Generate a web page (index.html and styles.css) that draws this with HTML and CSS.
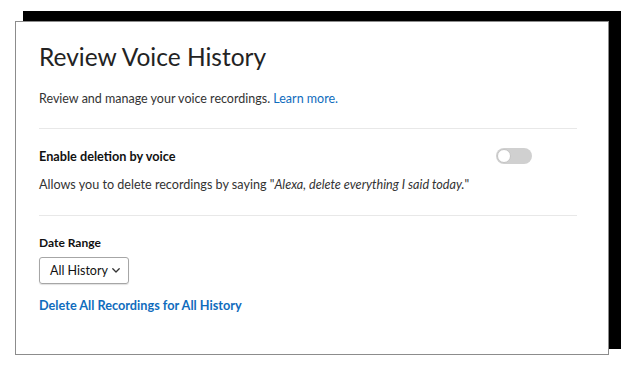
FILE: index.html
```html
<!DOCTYPE html>
<html lang="en">
<head>
<meta charset="utf-8">
<title>Review Voice History</title>
<link rel="stylesheet" href="styles.css">
</head>
<body>
<div class="card">
  <h1 class="title">Review Voice History</h1>
  <p class="intro">Review and manage your voice recordings. <a class="link" href="#">Learn more.</a></p>
  <hr class="sep">
  <div class="row">
    <span class="label">Enable deletion by voice</span>
    <span class="toggle"><span class="knob"></span></span>
  </div>
  <p class="desc">Allows you to delete recordings by saying "<em>Alexa, delete everything I said today.</em>"</p>
  <hr class="sep sep2">
  <div class="label small">Date Range</div>
  <div class="select"><span>All History</span>
    <svg class="chev" width="8" height="5" viewBox="0 0 8 5"><path d="M0.8 0.8 L4 4 L7.2 0.8" fill="none" stroke="#333" stroke-width="1.3" stroke-linecap="round" stroke-linejoin="round"/></svg>
  </div>
  <a class="link strong" href="#">Delete All Recordings for All History</a>
</div>
</body>
</html>
```

FILE: styles.css
```css
html, body {
  margin: 0;
  padding: 0;
  background: #fff;
}
body {
  font-family: Lato, "Liberation Sans", sans-serif;
  color: #333;
}
.card {
  box-sizing: border-box;
  margin: 21px 0 0 15px;
  width: 594px;
  height: 334px;
  border: 1px solid #8c8c8c;
  background: #fff;
  box-shadow: 10px -8px 0 2px #000;
  padding: 18px 31px 0 23px;
  display: flex;
  flex-direction: column;
  align-items: flex-start;
}
.title {
  margin: 0;
  font-size: 24.5px;
  font-weight: 400;
  line-height: 34px;
  color: #232323;
}
.intro {
  margin: 16px 0 0;
  font-size: 12.5px;
  line-height: 18px;
}
.link {
  color: #0f6cbd;
  text-decoration: none;
}
.sep {
  align-self: stretch;
  border: 0;
  border-top: 1px solid #e8e8e8;
  margin: 20px 0 0;
  height: 0;
}
.row {
  align-self: stretch;
  display: flex;
  justify-content: space-between;
  align-items: center;
  margin-top: 18px;
  padding-right: 45px;
}
.label {
  font-size: 12.7px;
  font-weight: 700;
  line-height: 18px;
  color: #111;
}
.toggle {
  position: relative;
  width: 36px;
  height: 16px;
  border-radius: 8px;
  background: #d0d0d0;
}
.knob {
  position: absolute;
  left: 1px;
  top: 1px;
  width: 12px;
  height: 12px;
  border: 1px solid #c4c4c4;
  border-radius: 50%;
  background: #fff;
}
.desc {
  margin: 11px 0 0;
  font-size: 12.6px;
  line-height: 18px;
}
.desc em {
  font-style: italic;
}
.sep2 {
  margin-top: 21px;
}
.small {
  margin-top: 18px;
  font-size: 12px;
}
.select {
  box-sizing: border-box;
  margin-top: 5px;
  height: 27px;
  width: 90px;
  border: 1px solid #a6a6a6;
  border-radius: 3px;
  box-shadow: 0 1px 1px rgba(0,0,0,0.12);
  display: flex;
  align-items: center;
  justify-content: space-between;
  padding: 0 8px 0 10px;
  font-size: 12.5px;
  color: #111;
  white-space: nowrap;
}
.chev {
  display: block;
}
.strong {
  margin-top: 12px;
  font-size: 12.7px;
  font-weight: 700;
  line-height: 18px;
}
```
